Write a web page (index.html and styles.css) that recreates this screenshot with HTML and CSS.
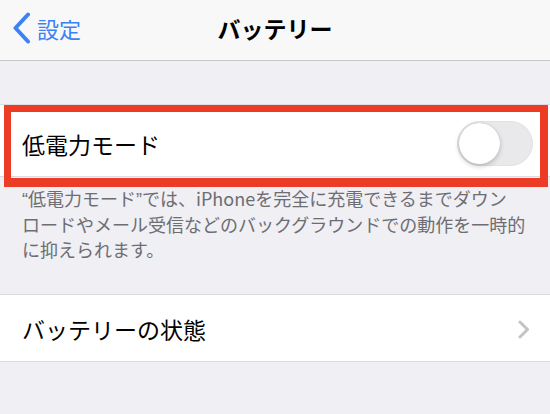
FILE: index.html
```html
<!DOCTYPE html>
<html lang="ja">
<head>
  <meta charset="UTF-8">
  <meta name="viewport" content="width=device-width, initial-scale=1.0">
  <title>バッテリー</title>
  <link rel="stylesheet" href="styles.css">
</head>
<body>
  <header class="navbar">
    <a class="back" href="#">
      <svg class="back-chevron" width="20" height="32" viewBox="0 0 20 32">
        <path d="M16 2.5 L3.5 16 L16 29.5" fill="none" stroke="#3a82f6" stroke-width="4" stroke-linecap="round" stroke-linejoin="round"/>
      </svg>
      <span>設定</span>
    </a>
    <h1 class="title">バッテリー</h1>
    <div></div>
  </header>

  <div class="group first">
    <div class="cell">
      <span class="label">低電力モード</span>
      <div class="toggle"><div class="knob"></div></div>
    </div>
    <div class="highlight"></div>
  </div>

  <p class="footnote">
    <span class="q">“</span>低電力モード<span class="q">”</span>では、iPhoneを完全に充電できるまでダウン<br>
    ロードやメール受信などのバックグラウンドでの動作を一時的<br>
    に抑えられます。
  </p>

  <div class="group">
    <div class="cell link">
      <span class="label">バッテリーの状態</span>
      <svg class="chevron" width="12" height="19" viewBox="0 0 12 19">
        <path d="M2 2 L9.5 9.5 L2 17" fill="none" stroke="#c4c4c8" stroke-width="3" stroke-linecap="round" stroke-linejoin="round"/>
      </svg>
    </div>
  </div>
</body>
</html>
```

FILE: styles.css
```css
body {
  margin: 0;
  width: 550px;
  height: 414px;
  overflow: hidden;
  background: #efeff4;
  font-family: "Noto Sans CJK JP", "Noto Sans", sans-serif;
  color: #000;
}
.navbar {
  height: 60px;
  background: #f8f8f8;
  border-bottom: 1px solid #c6c6c8;
  display: grid;
  grid-template-columns: 1fr auto 1fr;
  align-items: center;
}
.back {
  display: flex;
  align-items: center;
  gap: 5px;
  padding-left: 12px;
  color: #3a82f6;
  text-decoration: none;
  font-size: 22px;
  margin-top: -4px;
}
.title {
  margin: -4px 0 0 0;
  font-size: 23px;
  font-weight: bold;
}
.group {
  background: #fff;
  border-top: 1px solid #dcdce0;
  border-bottom: 1px solid #dcdce0;
}
.group.first {
  position: relative;
  margin-top: 43px;
}
.cell {
  height: 71px;
  box-sizing: border-box;
  padding: 6px 17px 0 22px;
  display: flex;
  align-items: center;
  justify-content: space-between;
}
.label {
  font-size: 23px;
}
.toggle {
  width: 76px;
  height: 45px;
  border-radius: 23px;
  background: #e9e9eb;
  box-sizing: border-box;
  border: 1px solid #e2e2e6;
  position: relative;
}
.knob {
  position: absolute;
  top: 1px;
  left: 1px;
  width: 41px;
  height: 41px;
  border-radius: 50%;
  background: #fff;
  box-shadow: 0 2px 5px rgba(0, 0, 0, 0.22), 0 0 1px rgba(0, 0, 0, 0.2);
}
.highlight {
  position: absolute;
  top: 0;
  left: 4px;
  width: 544px;
  height: 82px;
  box-sizing: border-box;
  border: 7px solid #ec3c26;
  border-right-width: 8px;
  border-bottom-width: 9px;
}
.footnote {
  margin: 9px 0 0 0;
  height: 108px;
  padding-left: 22px;
  font-size: 18px;
  line-height: 25.5px;
  color: #6d6d72;
  white-space: nowrap;
}
.q {
  font-family: "Liberation Sans", sans-serif;
  line-height: 1;
}
.cell.link {
  height: 66px;
  padding: 2px 22px 0 22px;
}
.chevron {
  margin-right: -2px;
}
```
